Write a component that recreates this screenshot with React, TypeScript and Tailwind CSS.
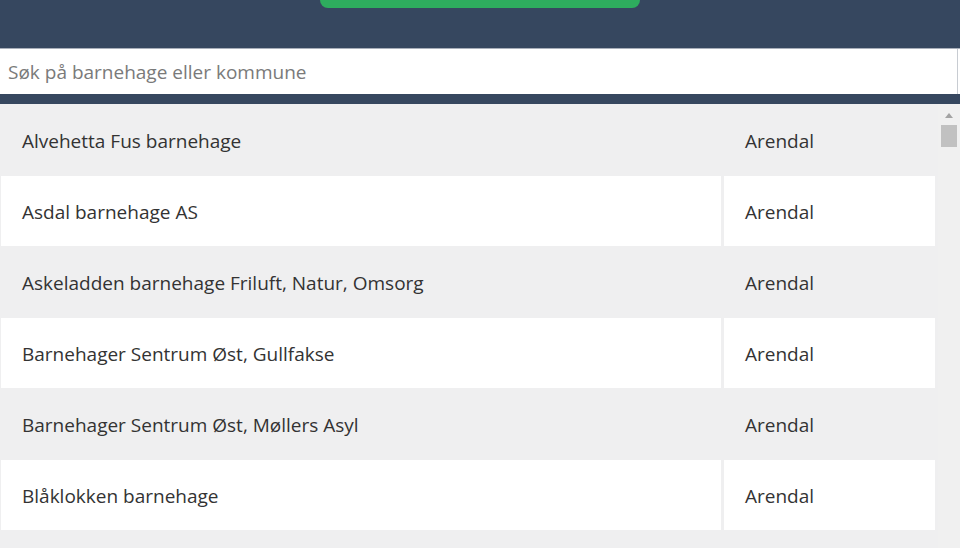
const rows = [
  { name: 'Alvehetta Fus barnehage', town: 'Arendal' },
  { name: 'Asdal barnehage AS', town: 'Arendal' },
  { name: 'Askeladden barnehage Friluft, Natur, Omsorg', town: 'Arendal' },
  { name: 'Barnehager Sentrum Øst, Gullfakse', town: 'Arendal' },
  { name: 'Barnehager Sentrum Øst, Møllers Asyl', town: 'Arendal' },
  { name: 'Blåklokken barnehage', town: 'Arendal' },
];

const App = () => {
  return (
    <div
      className="flex h-[548px] w-[960px] flex-col overflow-hidden bg-[#36475f]"
      style={{ fontFamily: '"Open Sans", "Noto Sans", sans-serif' }}
    >
      <div className="flex h-[48px] shrink-0 justify-center">
        <div className="h-[8px] w-[320px] rounded-b-[14px] bg-[#2ead5e]" />
      </div>
      <div className="h-[46px] shrink-0 border-t border-[#a9afba] bg-white pr-[2px]">
        <input
          className="h-full w-full border-r border-[#c8ccd2] bg-white pl-[8px] text-[19px] text-[#333] outline-none placeholder:text-[#7a7a7a]"
          placeholder="Søk på barnehage eller kommune"
        />
      </div>
      <div className="h-[10px] shrink-0" />
      <div className="flex min-h-0 flex-1 bg-[#efeff0]">
        <div className="flex flex-1 flex-col gap-[1px] pt-[1px] pl-[1px]">
          {rows.map((row, i) => {
            const even = i % 2 === 1;
            return (
              <div key={row.name} className="flex h-[70px] shrink-0 gap-[3px]">
                <div
                  className={`flex w-[720px] items-center pl-[21px] pt-[3px] text-[19px] text-[#333] ${
                    even ? 'bg-white' : ''
                  }`}
                >
                  {row.name}
                </div>
                <div
                  className={`flex w-[211px] items-center pl-[21px] pt-[3px] text-[19px] text-[#333] ${
                    even ? 'bg-white' : ''
                  }`}
                >
                  {row.town}
                </div>
              </div>
            );
          })}
        </div>
        <div className="flex w-[22px] shrink-0 flex-col items-center bg-[#f0f0f0] pt-[9px]">
          <div className="h-0 w-0 border-x-[4px] border-b-[5px] border-x-transparent border-b-[#a3a3a3]" />
          <div className="mt-[7px] h-[22px] w-[16px] bg-[#c1c1c1]" />
        </div>
      </div>
    </div>
  );
};

export default App;
